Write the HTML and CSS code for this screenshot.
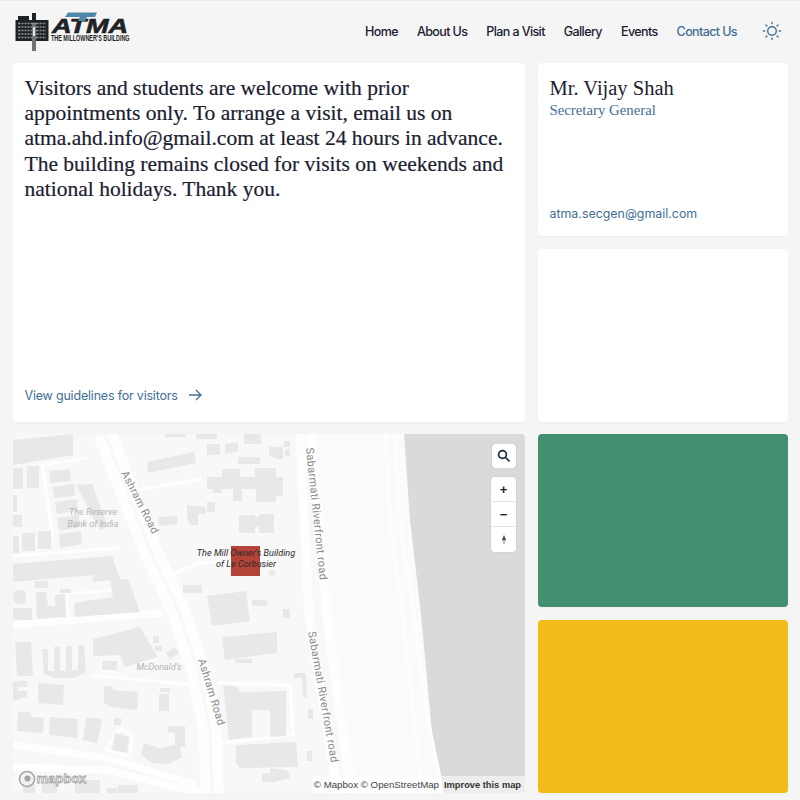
FILE: index.html
```html
<!DOCTYPE html>
<html lang="en">
  <head>
    <meta charset="UTF-8" />
    <meta name="viewport" content="width=device-width, initial-scale=1.0" />
    <title>Contact Us - ATMA</title>
    <link rel="stylesheet" href="styles.css">
  </head>
  <body>
    <header>
      <a href="#" class="logo">
        <svg width="122" height="44" viewBox="15 10 122 44">
          <rect class="logo-dark" x="15.500" y="20" width="33" height="21" />
          <rect class="logo-dark" x="18" y="16" width="11" height="4" />
          <rect class="logo-dark" x="32" y="13" width="4" height="7" />
          <path class="logo-windows" d="M18 23.500h28M18 27h28M18 30.500h28M18 34h28M18 37.500h28" />
          <path class="logo-mullions" d="M21 22v17M24 22v17M27 22v17M30 22v17M39 22v17M42 22v17M45 22v17" />
          <rect class="logo-tower" x="32" y="24" width="4" height="27" />
          <rect class="logo-light" x="33" y="27" width="2" height="9" />
          <text class="logo-name" transform="translate(52 33) scale(1.290 1)">ATMA</text>
          <polygon class="logo-blue" points="68,12.500 97,12.500 95,17 87,17 85,21 78,21 80,17 65,17" />
          <text class="logo-sub" transform="translate(51 41) scale(0.640 1)">THE MILLOWNER'S BUILDING</text>
        </svg>
      </a>
      <nav>
        <a href="#">Home</a>
        <a href="#">About Us</a>
        <a href="#">Plan a Visit</a>
        <a href="#">Gallery</a>
        <a href="#">Events</a>
        <a href="#" class="active">Contact Us</a>
        <button class="theme-btn" aria-label="Toggle theme">
          <svg width="20" height="20" viewBox="0 0 20 20">
            <circle cx="10" cy="10" r="4.300" />
            <path d="M10 1.500v1.300M10 17.200v1.300M1.500 10h1.300M17.200 10h1.300M4 4l.9.9M15.100 15.100l.9.9M4 16l.9-.9M15.100 4.900l.9-.9" />
          </svg>
        </button>
      </nav>
    </header>

    <main class="grid">
      <section class="card visit">
        <p>Visitors and students are welcome with prior appointments only. To arrange a visit, email us on atma.ahd.info@gmail.com at least 24 hours in advance. The building remains closed for visits on weekends and national holidays. Thank you.</p>
        <a href="#" class="guide-link">
          View guidelines for visitors
          <svg width="14" height="12" viewBox="0 0 14 12">
            <path d="M1 6h12M8 1l5 5-5 5" />
          </svg>
        </a>
      </section>

      <section class="card person">
        <div>
          <h2>Mr. Vijay Shah</h2>
          <div class="role">Secretary General</div>
        </div>
        <a href="#" class="mail">atma.secgen@gmail.com</a>
      </section>

      <section class="card blank"></section>

      <section class="map">
        <svg class="map-canvas" viewBox="13 434 512 359" width="512" height="359">
          <polygon class="riverside" points="305,434 404,434 443,793 345,793" />
          <polygon class="water" points="404,434 410,520 421,615 433,743 441,777 443,793 525,793 525,434" />

          <g class="roads">
            <polyline class="r-main" points="105,434 150,550 178,610 198,670 210,730 212,793" />
            <polyline class="r-band" points="300,434 309,615 322,700 338,793" />
            <polyline class="r-band" points="311,434 327,615 338,700 352,793" />
            <polyline class="r-thin" points="385,434 391,530 402,610 412,700 420,777 422,793" />
            <polyline class="r-thin" points="395,434 401,530 413,610 428,720 440,777 441,793" />
            <polyline class="r-mid" points="13,625 163,613" />
            <polyline class="r-mid" points="13,745 107,758 197,785" />
            <polyline class="r-mid" points="13,767 107,770 200,793" />
            <polyline class="r-small" points="87,458 42,465 53,537" />
            <polyline class="r-small" points="137,490 202,479" />
            <polyline class="r-small" points="13,556 120,548" />
            <polyline class="r-small" points="170,575 200,563 235,561" />
            <polyline class="r-small" points="113,590 66,594 68,617" />
            <polyline class="r-small" points="92,675 192,685" />
            <polyline class="r-small" points="102,660 102,670 120,674" />
            <polyline class="r-small" points="217,683 290,685 293,735 218,743" />
            <polyline class="r-small" points="120,729 106,750 130,757 132,735 120,729" />
            <polyline class="r-divide" points="105,434 150,550 178,610 198,670 210,730 212,793" />
          </g>

          <g class="buildings">
            <polygon points="13,440 73,434 73,455 13,465" />
            <rect x="13" y="468" width="10" height="21" />
            <rect x="27" y="466" width="12" height="22" />
            <polygon points="49,471 70,469 71,481 51,483" />
            <polygon points="52,487 74,484 75,496 54,498" />
            <polygon points="55,502 77,499 78,511 57,514" />
            <polygon points="57,518 79,515 80,527 59,531" />
            <polygon points="59,534 81,531 82,544 60,548" />
            <polygon points="76,485 92,484 108,527 100,530" />
            <rect x="13" y="495" width="4" height="17" />
            <rect x="13" y="515" width="9" height="12" />
            <rect x="13" y="536" width="6" height="17" />
            <rect x="22" y="533" width="13" height="18" />
            <rect x="38" y="531" width="13" height="18" />
            <polygon points="13,564 112,556 120,579 93,582 93,575 13,582" />
            <polygon points="110,579 128,579 140,612 75,617 74,603 113,597" />
            <rect x="35" y="581" width="13" height="7" />
            <polygon points="16,590 23,590 26,594 26,600 23,604 16,604 13,600 13,594" />
            <polygon points="36,592 46,592 48,606 55,606 55,595 65,594 66,617 37,619" />
            <rect x="13" y="608" width="19" height="12" />
            <rect x="60" y="589" width="11" height="4" />
            <rect x="183" y="585" width="19" height="8" />
            <polygon points="207,596 246,591 250,621 212,626" />
            <rect x="252" y="600" width="15" height="6" />
            <rect x="283" y="609" width="7" height="9" />
            <polygon points="222,637 277,632 277,653 225,660" />
            <rect x="235" y="659" width="17" height="4" />
            <polygon points="93,639 140,627 158,657 125,667 120,655 93,656" />
            <rect x="153" y="636" width="6" height="7" />
            <rect x="155" y="646" width="7" height="5" />
            <polygon points="166,653 175,647 179,653 170,659" />
            <rect x="102" y="661" width="15" height="9" />
            <polygon points="15,642 31,642 33,676 17,676" />
            <path d="M42 649h6v22h6v-24h6v24h6v-25h6v24h6v-25h6l2 28-13 5H55l-11-4z" />
            <path d="M13 681h14v6H18v4h9v6l-14 4z" />
            <polygon points="38,683 64,685 63,705 38,703" />
            <polygon points="104,686 113,687 113,690 138,692 137,710 112,707 104,703" />
            <rect x="160" y="688" width="10" height="4" />
            <rect x="159" y="694" width="10" height="17" />
            <polygon points="18,712 30,712 32,717 44,718 43,733 17,731" />
            <polygon points="50,717 78,719 77,738 49,735" />
            <polygon points="86,717 102,719 97,743 83,740" />
            <rect x="114" y="718" width="7" height="7" />
            <polygon points="115,733 129,737 127,753 112,750" />
            <polygon points="168,726 185,726 185,747 180,747 182,757 168,764 152,763 141,755 144,743 160,748 175,745 175,733 168,732" />
            <polygon points="223,685 238,687 240,692 286,691 286,736 270,737 270,710 252,710 252,737 229,740" />
            <polygon points="236,745 296,742 298,767 240,768 236,763" />
            <polygon points="270,768 278,769 288,771 290,778 270,783" />
            <path d="M294 673h12l1 24h-4l-1-19h-8z" />
            <rect x="308" y="709" width="5" height="10" />
            <rect x="307" y="751" width="5" height="10" />
            <rect x="23" y="780" width="12" height="13" />
            <rect x="42" y="783" width="15" height="10" />
            <rect x="75" y="780" width="25" height="13" />
            <rect x="107" y="788" width="10" height="5" />
            <rect x="118" y="785" width="20" height="8" />
            <rect x="262" y="773" width="8" height="9" />
            <polygon points="147,462 194,452 196,463 148,473" />
            <rect x="207" y="444" width="13" height="11" />
            <polygon points="225,444 238,442 238,451 225,454" />
            <rect x="165" y="434" width="21" height="3" />
            <rect x="196" y="434" width="21" height="5" />
            <rect x="244" y="434" width="17" height="10" />
            <polygon points="269,447 283,447 283,459 276,459 269,455" />
            <rect x="284" y="441" width="6" height="6" />
            <rect x="285" y="449" width="5" height="7" />
            <rect x="238" y="457" width="22" height="7" />
            <rect x="207" y="477" width="76" height="12" />
            <rect x="222" y="469" width="18" height="8" />
            <rect x="255" y="468" width="21" height="9" />
            <rect x="213" y="489" width="9" height="4" />
            <rect x="233" y="489" width="9" height="12" />
            <rect x="256" y="489" width="20" height="13" />
            <rect x="276" y="484" width="7" height="12" />
            <polygon points="187,505 206,507 206,514 198,514 198,525 190,525 187,517" />
            <rect x="207" y="502" width="8" height="10" />
            <polygon points="158,517 177,516 177,524 159,526" />
            <rect x="239" y="515" width="16" height="18" />
            <rect x="255" y="517" width="4" height="10" />
            <rect x="259" y="514" width="15" height="19" />
            <rect x="269" y="570" width="6" height="5" />
          </g>

          <rect class="landmark" x="231" y="546" width="29" height="30" />

          <text class="street" transform="translate(121 473) rotate(63)">Ashram Road</text>
          <text class="street" transform="translate(198 660) rotate(73)">Ashram Road</text>
          <text class="street" transform="translate(306 448) rotate(84)">Sabarmati Riverfront road</text>
          <text class="street" transform="translate(308 632) rotate(80)">Sabarmati Riverfront road</text>
          <text class="poi" x="93" y="515">The Reserve</text>
          <text class="poi" x="93" y="527">Bank of India</text>
          <text class="poi" x="159" y="670">McDonald's</text>
          <text class="place" x="246" y="556">The Mill Owner's Building</text>
          <text class="place" x="246" y="567">of Le Corbusier</text>
        </svg>

        <button class="map-search" aria-label="Search">
          <svg width="14" height="14" viewBox="0 0 14 14">
            <circle cx="5.500" cy="5.500" r="3.900" />
            <path d="M8.500 8.500l4 4" />
          </svg>
        </button>

        <div class="map-zoom">
          <button aria-label="Zoom in">+</button>
          <button aria-label="Zoom out">&minus;</button>
          <button aria-label="Reset north">
            <svg width="6" height="12" viewBox="0 0 6 12">
              <polygon class="needle-n" points="3,1 5,6 1,6" />
              <polygon class="needle-s" points="1,6 5,6 3,11" />
            </svg>
          </button>
        </div>

        <div class="mapbox-logo">
          <svg width="18" height="18" viewBox="0 0 18 18">
            <circle class="ring" cx="9" cy="9" r="7.500" />
            <circle class="dot" cx="9.500" cy="8.500" r="3" />
          </svg>
          <span>mapbox</span>
        </div>

        <div class="attrib">
          <span>&copy; Mapbox &copy; OpenStreetMap</span>
          <b>Improve this map</b>
        </div>
      </section>

      <section class="card green"></section>
      <section class="card yellow"></section>
    </main>
  </body>
</html>
```

FILE: styles.css
```css
* {
  margin: 0;
  padding: 0;
  box-sizing: border-box;
}

body {
  background-color: #f5f5f5;
  font-family: Inter, "Liberation Sans", sans-serif;
  color: #1a2030;
  height: 800px;
  overflow: hidden;
  border-top: 1px solid #ececec;
}

header {
  display: flex;
  justify-content: space-between;
  align-items: center;
  height: 62px;
  padding: 0 18px 2px 15px;
}

.logo {
  display: block;
  height: 44px;
  margin-top: 2px;
}

.logo-dark {
  fill: #1f2224;
}

.logo-windows {
  stroke: #8d9396;
  stroke-width: 1.300;
  fill: none;
}

.logo-mullions {
  stroke: #1f2224;
  stroke-width: 1;
  fill: none;
}

.logo-tower {
  fill: #6f7477;
}

.logo-light {
  fill: #e4e4e4;
}

.logo-blue {
  fill: #4e86a8;
}

.logo-name {
  font-family: "Liberation Sans", sans-serif;
  font-style: italic;
  font-weight: bold;
  font-size: 21px;
  fill: #1f2224;
  stroke: #1f2224;
  stroke-width: 0.600;
}

.logo-sub {
  font-family: "Liberation Sans", sans-serif;
  font-weight: bold;
  font-size: 8.500px;
  fill: #1f2224;
}

nav {
  display: flex;
  align-items: center;
  gap: 19px;
}

nav a {
  text-decoration: none;
  color: #1a2030;
  font-size: 12.500px;
  font-weight: 500;
  letter-spacing: -0.6px;
}

nav a.active {
  color: #3f6f96;
}

.theme-btn {
  display: flex;
  margin-left: 6px;
  border: none;
  background: none;
}

.theme-btn svg {
  fill: none;
  stroke: #3f6f96;
  stroke-width: 1.400;
  stroke-linecap: round;
}

.grid {
  display: grid;
  grid-template-columns: repeat(3, 1fr);
  grid-template-rows: repeat(4, 173px);
  gap: 12.500px;
  padding: 0 12.500px;
}

.card {
  background: white;
  border-radius: 4px;
  box-shadow: 0 1px 2px rgba(0, 0, 0, 0.03);
  padding: 13px 12px 12px;
}

.visit {
  grid-column: span 2;
  grid-row: span 2;
  display: flex;
  flex-direction: column;
  justify-content: space-between;
  padding-bottom: 19px;
}

.visit p {
  font-family: "Liberation Serif", serif;
  font-size: 21.500px;
  line-height: 25.200px;
  -webkit-text-stroke: 0.2px #1a2030;
}

.guide-link {
  display: flex;
  align-items: center;
  gap: 10px;
  color: #3f6f96;
  font-size: 12.500px;
  letter-spacing: -0.2px;
  text-decoration: none;
}

.guide-link svg {
  fill: none;
  stroke: #3f6f96;
  stroke-width: 1.300;
}

.person {
  display: flex;
  flex-direction: column;
  justify-content: space-between;
  padding-bottom: 15px;
}

.person h2 {
  font-family: "Liberation Serif", serif;
  font-weight: normal;
  font-size: 20.500px;
  line-height: 25px;
}

.role {
  font-family: "Liberation Serif", serif;
  font-size: 14.800px;
  line-height: 18px;
  color: #3f6f96;
}

.mail {
  color: #3f6f96;
  font-size: 12.400px;
  text-decoration: none;
}

.map {
  position: relative;
  grid-column: span 2;
  grid-row: span 2;
  border-radius: 4px;
  overflow: hidden;
  background: #f8f8f8;
}

.map-canvas {
  display: block;
}

.riverside {
  fill: #fbfbfb;
}

.water {
  fill: #dadada;
}

.roads polyline {
  fill: none;
  stroke: #fefefe;
}

.roads .r-main {
  stroke-width: 23;
}

.roads .r-band {
  stroke-width: 9;
}

.roads .r-thin {
  stroke-width: 3;
}

.roads .r-mid {
  stroke-width: 7;
}

.roads .r-small {
  stroke-width: 3;
}

.roads .r-divide {
  stroke: #f8f8f8;
  stroke-width: 3;
}

.buildings {
  fill: #e8e8e8;
}

.landmark {
  fill: #b03a2e;
  fill-opacity: 0.95;
}

.street {
  font-family: Roboto, sans-serif;
  font-size: 11px;
  fill: #8a8a8a;
  letter-spacing: 0.3px;
}

.poi {
  font-family: Roboto, sans-serif;
  font-style: italic;
  font-size: 9px;
  fill: #b5b5b5;
  text-anchor: middle;
}

.place {
  font-family: Roboto, sans-serif;
  font-style: italic;
  font-size: 9.100px;
  fill: #2a2a2a;
  text-anchor: middle;
}

.map-search {
  position: absolute;
  top: 10px;
  right: 9px;
  display: flex;
  align-items: center;
  justify-content: center;
  width: 24px;
  height: 24px;
  border: none;
  border-radius: 4px;
  background: white;
  box-shadow: 0 0 2px rgba(0, 0, 0, 0.1);
}

.map-search svg {
  fill: none;
  stroke: #1a2a44;
  stroke-width: 1.700;
}

.map-zoom {
  position: absolute;
  top: 43px;
  right: 9px;
  width: 25px;
  border-radius: 4px;
  background: white;
  box-shadow: 0 0 2px rgba(0, 0, 0, 0.1);
}

.map-zoom button {
  display: flex;
  align-items: center;
  justify-content: center;
  width: 25px;
  height: 25px;
  border: none;
  border-bottom: 1px solid #e4e4e4;
  background: none;
  font-family: "Liberation Sans", sans-serif;
  font-size: 13px;
  font-weight: bold;
  color: #222;
}

.map-zoom button:last-child {
  border-bottom: none;
}

.needle-n {
  fill: #444;
}

.needle-s {
  fill: #bbb;
}

.mapbox-logo {
  position: absolute;
  left: 5px;
  bottom: 5px;
  display: flex;
  align-items: center;
  gap: 1px;
  opacity: 0.9;
}

.mapbox-logo .ring {
  fill: #f4f4f4;
  stroke: #9a9a9a;
  stroke-width: 1.500;
}

.mapbox-logo .dot {
  fill: #9a9a9a;
}

.mapbox-logo span {
  font-family: "Liberation Sans", sans-serif;
  font-weight: bold;
  font-size: 13px;
  color: #f4f4f4;
  -webkit-text-stroke: 0.8px #9a9a9a;
}

.attrib {
  position: absolute;
  right: 0;
  bottom: 0;
  display: flex;
  align-items: baseline;
  gap: 5px;
  padding: 2px 4px 1px 2px;
  background: rgba(255, 255, 255, 0.5);
  font-family: "Liberation Sans", sans-serif;
  font-size: 9.700px;
  line-height: 13px;
  color: #444;
}

.attrib b {
  font-size: 9.300px;
  color: #333;
}

.green {
  background: #41906f;
  grid-column: 3;
  grid-row: 3;
}

.yellow {
  background: #f2bc1b;
  grid-column: 3;
  grid-row: 4;
}
```
